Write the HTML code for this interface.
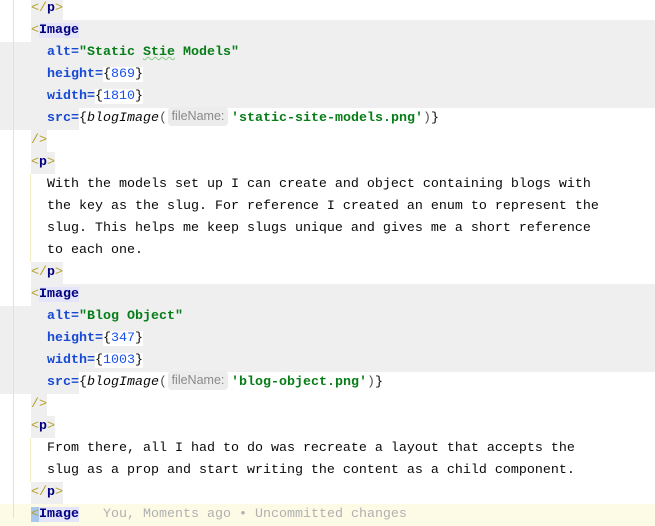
<!DOCTYPE html><html><head><meta charset="utf-8"><style>
*{margin:0;padding:0;box-sizing:border-box}
body{width:655px;height:518px;overflow:hidden;background:#fff;position:relative;font-family:"Liberation Mono",monospace;font-size:13.33px;color:#080808}
.r{position:absolute;left:0;height:22px;line-height:22px;white-space:pre;width:655px}
.c{position:absolute;left:31px;top:0}
.g{background:#efefef}
.pt{color:#b5a12a}
.tn{color:#000080;font-weight:bold}
.tb{background:#efefef}
.lb{background:#e4e4fb}
.at{color:#174ad4;font-weight:bold}
.st{color:#067d17;font-weight:bold}
.nu{color:#1750eb}
.w{background:#fff}
.it{font-style:italic}
.h{display:inline-block;width:60px;height:19px;line-height:19px;vertical-align:middle;margin:-2px 3px 0 1px;background:#ececec;border-radius:4px;color:#8a8a8a;font-family:"Liberation Sans",sans-serif;font-size:12.5px;text-align:center}
.vl{position:absolute;left:13px;top:0;width:1px;height:518px;background:#e0e0e0}
.gd{position:absolute;left:30px;width:1px;background:#f0ecc4}
</style></head><body>
<div class="r g" style="top:42px;height:66px"></div>
<div class="r g" style="top:108px;width:79px"></div>
<div class="r g" style="top:20px;left:31px;width:624px"></div>
<div class="r g" style="top:306px;height:66px"></div>
<div class="r g" style="top:372px;width:79px"></div>
<div class="r g" style="top:284px;left:31px;width:624px"></div>
<div class="r" style="top:504px;background:#fdfbe6"></div>
<div class="vl"></div>
<div class="gd" style="top:174px;height:88px"></div>
<div class="gd" style="top:438px;height:44px"></div>

<div class="r" style="top:-2px"><span class="c tb"><span class="pt">&lt;/</span><span class="tn">p</span><span class="pt">&gt;</span></span></div>
<div class="r" style="top:20px"><span class="c"><span class="pt">&lt;</span><span class="tn lb">Image</span></span></div>
<div class="r" style="top:42px"><span class="c">  <span class="at">alt=</span><span class="st">"Static <span style="text-decoration:underline wavy #8c8;text-decoration-thickness:1px">Stie</span> Models"</span></span></div>
<div class="r" style="top:64px"><span class="c">  <span class="at">height=</span><span class="w">{<span class="nu">869</span>}</span></span></div>
<div class="r" style="top:86px"><span class="c">  <span class="at">width=</span><span class="w">{<span class="nu">1810</span>}</span></span></div>
<div class="r" style="top:108px"><span class="c">  <span class="at">src=</span><span class="w">{<span class="it">blogImage</span><span style="color:#555">(</span><span class="h">fileName:</span><span class="st">'static-site-models.png'</span><span style="color:#555">)</span>}</span></span></div>
<div class="r" style="top:130px"><span class="c tb"><span class="pt">/&gt;</span></span></div>
<div class="r" style="top:152px"><span class="c tb"><span class="pt">&lt;</span><span class="tn">p</span><span class="pt">&gt;</span></span></div>
<div class="r" style="top:174px"><span class="c">  With the models set up I can create and object containing blogs with</span></div>
<div class="r" style="top:196px"><span class="c">  the key as the slug. For reference I created an enum to represent the</span></div>
<div class="r" style="top:218px"><span class="c">  slug. This helps me keep slugs unique and gives me a short reference</span></div>
<div class="r" style="top:240px"><span class="c">  to each one.</span></div>
<div class="r" style="top:262px"><span class="c tb"><span class="pt">&lt;/</span><span class="tn">p</span><span class="pt">&gt;</span></span></div>
<div class="r" style="top:284px"><span class="c"><span class="pt">&lt;</span><span class="tn lb">Image</span></span></div>
<div class="r" style="top:306px"><span class="c">  <span class="at">alt=</span><span class="st">"Blog Object"</span></span></div>
<div class="r" style="top:328px"><span class="c">  <span class="at">height=</span><span class="w">{<span class="nu">347</span>}</span></span></div>
<div class="r" style="top:350px"><span class="c">  <span class="at">width=</span><span class="w">{<span class="nu">1003</span>}</span></span></div>
<div class="r" style="top:372px"><span class="c">  <span class="at">src=</span><span class="w">{<span class="it">blogImage</span><span style="color:#555">(</span><span class="h">fileName:</span><span class="st">'blog-object.png'</span><span style="color:#555">)</span>}</span></span></div>
<div class="r" style="top:394px"><span class="c tb"><span class="pt">/&gt;</span></span></div>
<div class="r" style="top:416px"><span class="c tb"><span class="pt">&lt;</span><span class="tn">p</span><span class="pt">&gt;</span></span></div>
<div class="r" style="top:438px"><span class="c">  From there, all I had to do was recreate a layout that accepts the</span></div>
<div class="r" style="top:460px"><span class="c">  slug as a prop and start writing the content as a child component.</span></div>
<div class="r" style="top:482px"><span class="c tb"><span class="pt">&lt;/</span><span class="tn">p</span><span class="pt">&gt;</span></span></div>
<div class="r" style="top:504px"><span class="c"><span class="pt" style="background:#a8c8f0">&lt;</span><span class="tn lb">Image</span>   <span style="color:#b0b0b0">You, Moments ago • Uncommitted changes</span></span></div>
</body></html>
